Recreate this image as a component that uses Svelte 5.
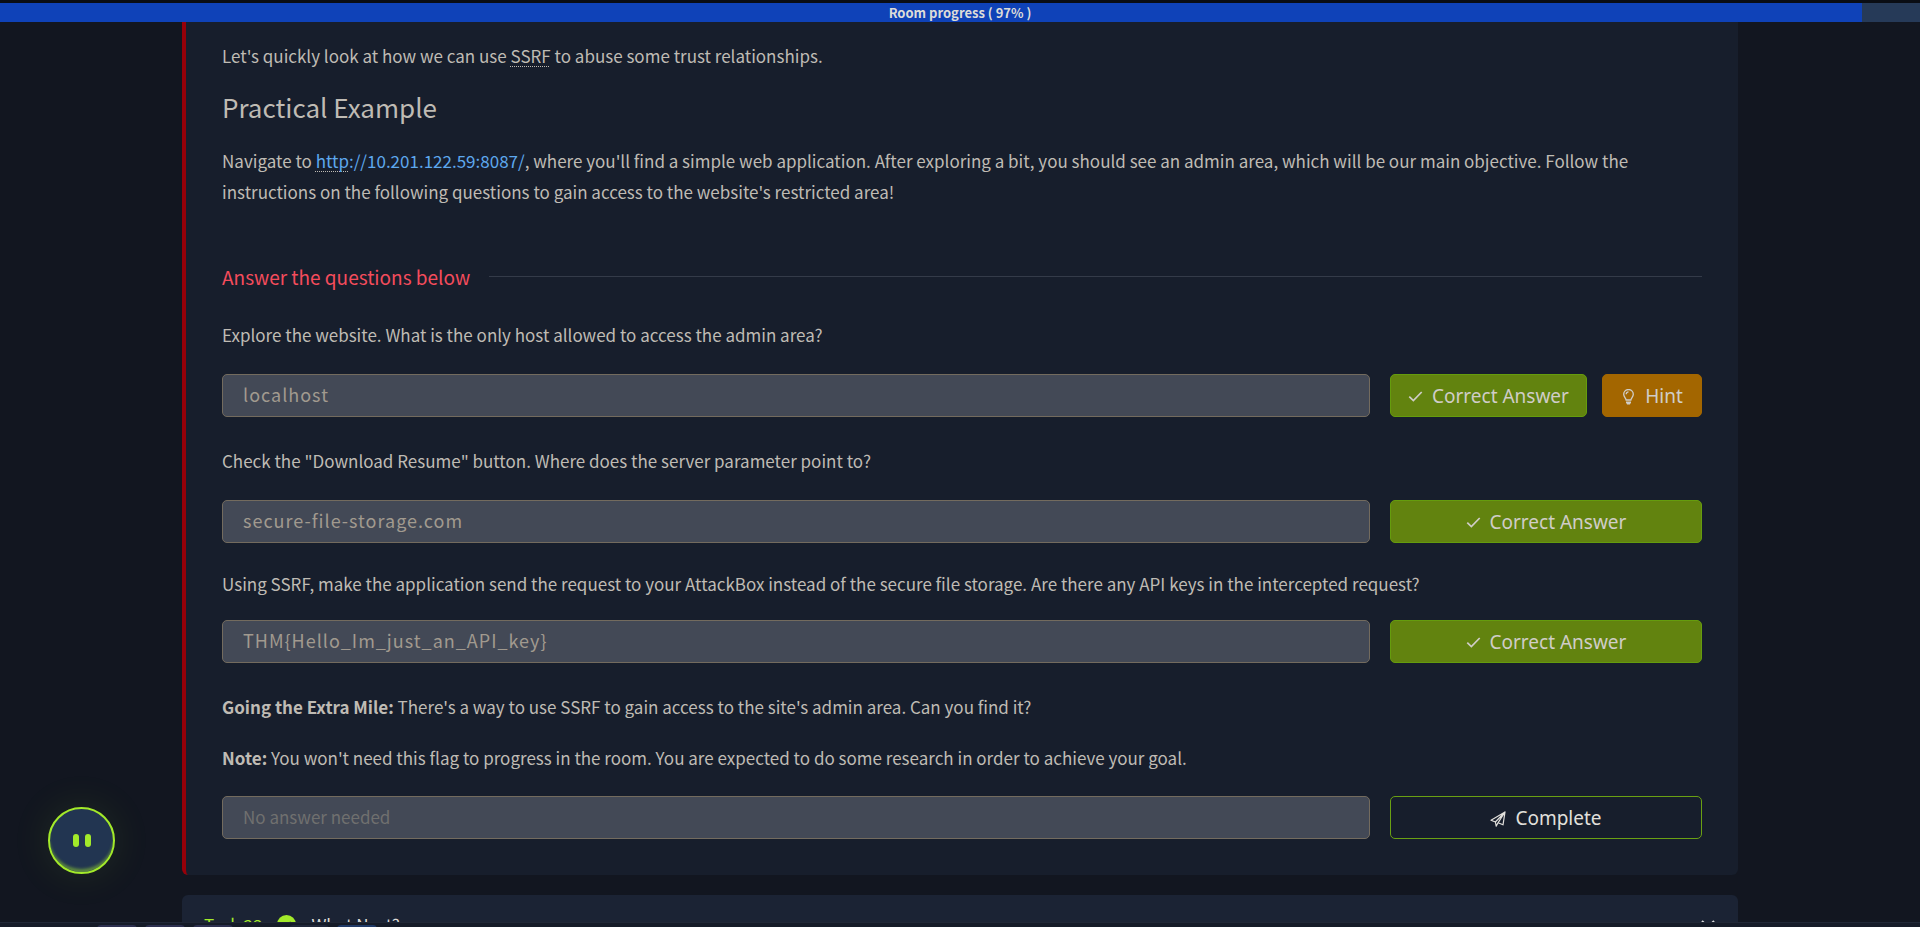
<script>
  const questions = [
    { id: 'q1', text: 'Explore the website. What is the only host allowed to access the admin area?', answer: 'localhost', hint: true, tight: false },
    { id: 'q2', text: 'Check the "Download Resume" button. Where does the server parameter point to?', answer: 'secure-file-storage.com', hint: false, tight: false },
    { id: 'q3', text: 'Using SSRF, make the application send the request to your AttackBox instead of the secure file storage. Are there any API keys in the intercepted request?', answer: 'THM{Hello_Im_just_an_API_key}', hint: false, tight: true }
  ];
  const progress = 97;
</script>

<div class="page">
  <div class="progress">
    <div class="fill" style="width: {progress}%"></div>
    <span class="progress-text">Room progress ( {progress}% )</span>
  </div>

  <main>
    <section class="task">
      <p>Let's quickly look at how we can use <span class="term">SSRF</span> to abuse some trust relationships.</p>
      <h2>Practical Example</h2>
      <p>Navigate to <a href="http://10.201.122.59:8087/"><span class="term">http</span>://10.201.122.59:8087/</a>, where you'll find a simple web application. After exploring a bit, you should see an admin area, which will be our main objective. Follow the instructions on the following questions to gain access to the website's restricted area!</p>

      <div class="divider"><h3>Answer the questions below</h3><hr /></div>

      {#each questions as q}
        <div class="question" class:tight={q.tight}>
          <label for={q.id}>{q.text}</label>
          <div class="row">
            <input id={q.id} type="text" value={q.answer} />
            <div class="actions">
              <button class="correct" type="button">
                <svg viewBox="0 0 14 14" aria-hidden="true"><path d="M1.2 7.2 5 10.8 12.8 2.8" /></svg>
                Correct Answer
              </button>
              {#if q.hint}
                <button class="hint" type="button">
                  <svg viewBox="0 0 14 16" aria-hidden="true"><path d="M4.6 11C4.4 9 2.2 7.8 2.2 5.3a4.8 4.8 0 0 1 9.6 0C11.8 7.8 9.6 9 9.4 11ZM4.7 5.3c0-1.4 1-2.4 2.3-2.4" /><path class="solid" d="M4.5 12.4h5v1.2L8.4 15.4H5.6l-1.1-1.8z" /></svg>
                  Hint
                </button>
              {/if}
            </div>
          </div>
        </div>
      {/each}

      <div class="question last">
        <p><strong>Going the Extra Mile:</strong> There's a way to use SSRF to gain access to the site's admin area. Can you find it?</p>
        <label for="q4"><strong>Note:</strong> You won't need this flag to progress in the room. You are expected to do some research in order to achieve your goal.</label>
        <div class="row">
          <input id="q4" type="text" placeholder="No answer needed" />
          <div class="actions">
            <button class="complete" type="button">
              <svg class="plane" viewBox="0 0 16 16" aria-hidden="true"><path d="M5.4 11 1 9.2 15 1 13 13.8 8 11.8M5.4 11 15 1 8 11.8 6.2 15.2 5.4 11Z" /></svg>
              Complete
            </button>
          </div>
        </div>
      </div>
    </section>

    <section class="next">
      <span class="number">Task 23</span>
      <svg class="done" viewBox="0 0 20 20" aria-hidden="true"><circle cx="10" cy="10" r="10" fill="#a3ea2a" /><path d="m5.5 11 3 3 6-6.5" fill="none" stroke="#1c2538" stroke-width="2" /></svg>
      <span class="title">What Next?</span>
      <svg class="chevron" viewBox="0 0 16 10" aria-hidden="true"><path d="m2 2 6 6 6-6" fill="none" stroke="#ddd" stroke-width="2" /></svg>
    </section>
  </main>

  <button class="bot" type="button" aria-label="Assistant"><i></i><i></i></button>
  <div class="dock"><b></b><b></b><b></b><b class="dim"></b><b class="blue"></b></div>
</div>

<style>
  :global(body) { margin: 0; background: #121620; }
  * { box-sizing: border-box; }
  .page {
    height: 100vh;
    overflow: hidden;
    position: relative;
    background: #121620;
    color: #bfbbb4;
    font: 17px/31px "Noto Sans CJK SC", "Noto Sans", sans-serif;
  }
  .progress { height: 22px; border-top: 3px solid #0a0d14; background: #263a58; position: relative; }
  .fill { height: 100%; background: #0f42b8; }
  .progress-text {
    position: absolute; inset: 0; text-align: center;
    font-size: 13px; line-height: 20px; font-weight: 700; color: #dddcd9;
  }
  main { width: 81.04%; margin: 0 auto; }
  .task {
    background: #171e2c;
    border-left: 4px solid #960009;
    border-radius: 0 0 6px 6px;
    padding: 18px 36px 36px;
  }
  p, h2, h3 { margin: 0; }
  h2 { font-size: 26px; line-height: 36px; font-weight: 400; margin: 18px 0 20px; }
  .term {
    text-decoration: underline dotted #bfbbb4 1px;
    text-underline-offset: 3px;
    text-decoration-skip-ink: none;
  }
  a { color: #5ea8ee; text-decoration: none; }
  .divider { display: flex; align-items: center; gap: 19px; margin: 54px 0 27px; }
  h3 { font-size: 19px; line-height: 31px; font-weight: 400; color: #f44c5c; }
  hr { flex: 1; border: 0; border-top: 1px solid #343b49; margin: 0; }
  .question { margin-bottom: 28px; }
  label { display: block; }
  .tight label { line-height: 25px; }
  .row { display: grid; grid-template-columns: 1fr 312px; gap: 20px; margin-top: 24px; }
  input {
    height: 43px; width: 100%;
    border: 1px solid #736b5e; border-radius: 5px;
    background: #434956; color: #a19a8f;
    padding: 0 20px 3px;
    font: inherit; font-size: 18px; letter-spacing: 1px;
  }
  input::placeholder { color: #70706f; opacity: 1; letter-spacing: 0; font-size: 17px; }
  .actions { display: flex; gap: 15px; }
  button { font: 19px/25px "Noto Sans", sans-serif; }
  .actions button {
    display: flex; align-items: center; justify-content: center; gap: 9px;
    flex: 1; height: 43px; padding: 2px 0 0;
    border: 1px solid; border-radius: 5px; white-space: nowrap;
  }
  .actions svg { width: 15px; height: 15px; fill: none; stroke: currentColor; stroke-width: 1.6; }
  .actions .hint svg { stroke-width: 1.3; height: 16px; }
  .actions .plane { stroke-width: 1.2; stroke-linejoin: round; width: 16px; height: 16px; }
  .actions .solid { fill: currentColor; stroke: none; }
  .actions .correct { background: #62830f; border-color: #659c0d; color: #d0cdc7; }
  .actions .hint { background: #a36600; border-color: #a36600; color: #d0cdc7; flex: 0 0 100px; }
  .actions .complete { background: transparent; border-color: #6aa013; color: #e2e0dc; }
  .last { margin-bottom: 0; }
  .last p { margin-bottom: 20px; }
  .last .row { margin-top: 23px; }
  .next {
    display: flex; align-items: center;
    margin-top: 20px; height: 58px; padding: 0 22px;
    background: #1b2334; border-radius: 6px;
  }
  .number { color: #a3ea2a; }
  .done { width: 19px; margin: 0 15px; }
  .title { color: #dedcd8; }
  .chevron { width: 16px; margin-left: auto; }
  .bot {
    position: absolute; left: 48px; bottom: 53px;
    width: 67px; height: 67px; padding: 0;
    border: 2px solid #a3ea2a; border-radius: 50%;
    background: #223551;
    box-shadow: 0 0 40px rgba(163, 234, 42, 0.1), inset 0 -4px 3px -1px rgba(163, 234, 42, 0.45);
    display: flex; align-items: center; justify-content: center; gap: 6px;
  }
  .bot i { width: 6px; height: 13px; border-radius: 3px; background: #a3ea2a; }
  .dock {
    position: absolute; inset: auto 0 0; height: 5px; overflow: hidden;
    display: flex; gap: 8px; padding: 2px 0 0 97px;
    background: #151b28; border-top: 1px solid #202736;
  }
  .dock b { width: 40px; height: 8px; border-radius: 4px 4px 0 0; background: #2d3050; }
  .dock .dim { margin-left: 48px; background: #20273a; }
  .dock .blue { background: #203a68; }
</style>
